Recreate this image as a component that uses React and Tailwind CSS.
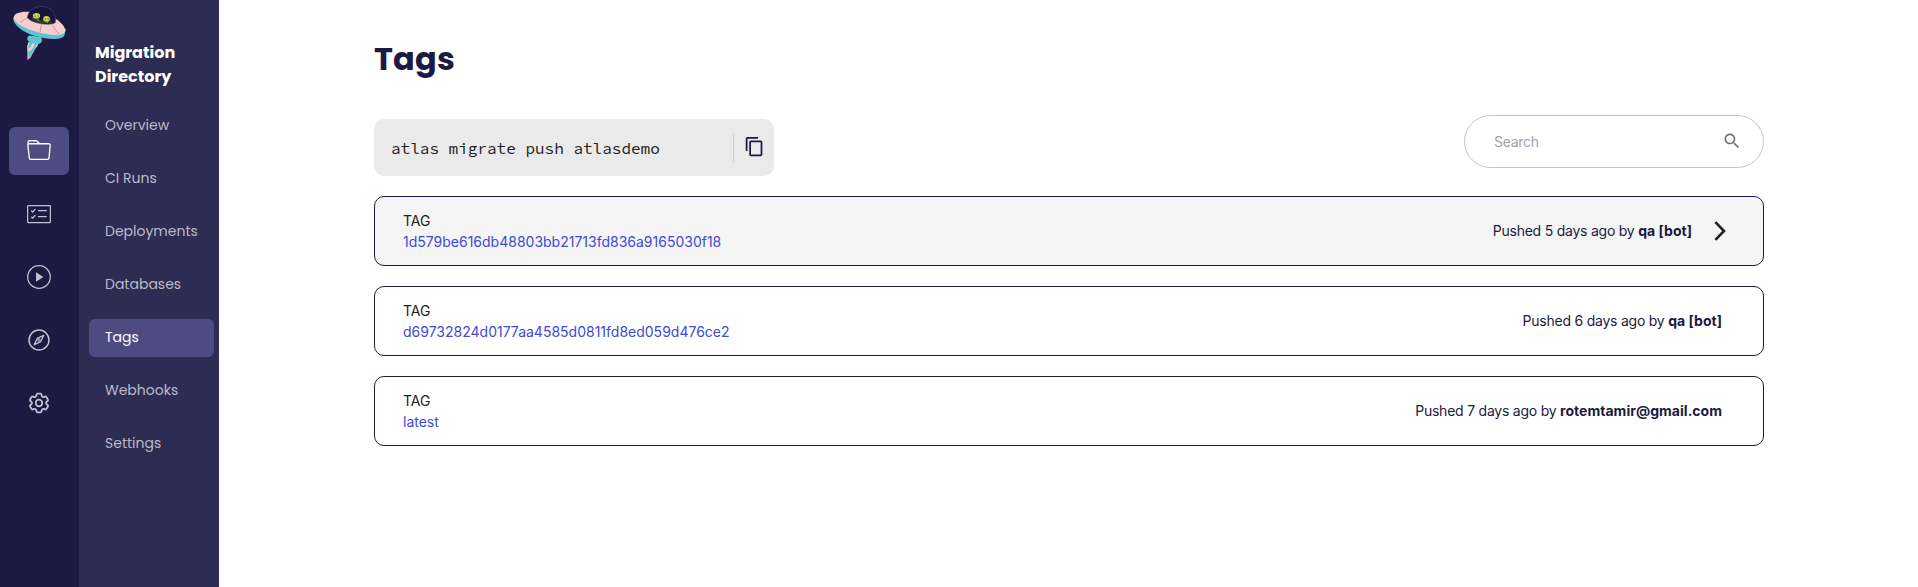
const railIcons = [
  { id: 'folder', active: true },
  { id: 'checks', active: false },
  { id: 'play', active: false },
  { id: 'compass', active: false },
  { id: 'gear', active: false },
];

const menu = ['Overview', 'CI Runs', 'Deployments', 'Databases', 'Tags', 'Webhooks', 'Settings'];

const tags = [
  { name: '1d579be616db48803bb21713fd836a9165030f18', when: '5 days ago', by: 'qa [bot]', hovered: true },
  { name: 'd69732824d0177aa4585d0811fd8ed059d476ce2', when: '6 days ago', by: 'qa [bot]' },
  { name: 'latest', when: '7 days ago', by: 'rotemtamir@gmail.com' },
];

function Logo() {
  return (
    <svg className="h-[54px] w-[54px]" viewBox="0 0 54 54" fill="none">
      <path d="M15.500 36 L14 41 L14.500 46 L14.500 54 L18 51 L19 48 L22 43 L24.500 40 L25.500 36 Z" fill="#f9cdd0" />
      <path d="M16.500 36 L14.800 43 L17.500 41 L20 36 Z M22 37 L20 42 L17.500 44.500 L15.200 46 L15.800 52 L18.500 49.500 L21 45.500 L22.500 41 L24 38 Z" fill="#5fc3d3" />
      <path d="M16.500 29.500 C13.800 30.500 13.500 34 16 35.500 C18.500 37.500 24 38.800 27 37.500 C29.500 36 29.500 33 28 31 Z" fill="#5fc3d3" />
      <path d="M0.300 11.500 C-.8 18 9 26 22 30 C36 34 50 34.300 51.500 29 L53 23 L1 12 Z" fill="#5fc3d3" />
      <path d="M17 6 C7 5.200 1.200 7.500 0.700 11.500 C0.500 16.500 12 22.700 25 26.200 C39 29.800 50.500 30 52 25.500 C53 21 47 14.500 39 11 Z" fill="#f9cdd0" />
      <path d="M7 16.500 L15.500 11 M27 26.500 L28.500 17.500 M46 28 L39 19" stroke="#8d7c96" strokeWidth=".6" />
      <path d="M14.500 11.500 C15 4.500 21.500 .4 29 .4 C37.500 .4 43.500 7 42.300 16.500 C38 20.500 17 17 14.500 11.500 Z" fill="#17163a" stroke="#454460" strokeWidth=".7" />
      <path d="M18.500 13 C19 9 24 8 26 11.500 L28 15 L29.500 13.500 C32 9 38 10 39 17 C34 18.500 24 17 18.500 13 Z" fill="#333d32" />
      <ellipse cx="23.500" cy="9.800" rx="3.600" ry="2.800" fill="#cfd64a" />
      <ellipse cx="33.500" cy="12.800" rx="3.300" ry="2.900" fill="#cfd64a" />
      <path d="M22 9.600 v1 M25 9.600 v1 M32.200 12.500 v1 M35 12.500 v1" stroke="#29331f" strokeWidth="1" />
      <path d="M24 13.500 l2 1.200 M33.500 16.200 l1.500 .3" stroke="#a4ae3d" strokeWidth=".8" />
    </svg>
  );
}

function RailIcon({ id }) {
  if (id === 'folder')
    return (
      <svg className="mb-0.5 size-6" viewBox="0 0 24 24" fill="none" stroke="currentColor" strokeWidth="1.350" strokeLinejoin="round">
        <path d="M2.300 20 L.9 7.300 C.8 6.300 1.400 5.700 2.300 5.700 H21.700 C22.700 5.700 23.300 6.300 23.200 7.300 L22 20 C21.900 20.900 21.400 21.400 20.500 21.400 H3.800 C2.900 21.400 2.400 20.900 2.300 20 Z" />
        <path d="M1.100 6.600 V4 C1.100 3.200 1.600 2.700 2.400 2.700 H8.600 C9.300 2.700 9.700 2.900 10.200 3.300 L12.700 5.700" />
      </svg>
    );
  if (id === 'checks')
    return (
      <svg className="size-6" viewBox="0 0 24 24" fill="none" stroke="currentColor" strokeWidth="1.250" strokeLinecap="round" strokeLinejoin="round">
        <rect x=".6" y="3.500" width="22.800" height="17" rx="1" />
        <path d="M4.500 9 l1.200 1 L8 7.300 M4.500 15.200 l1.200 1 L8 13.500 M11.500 8.700 h7.800 M11.500 14.700 h7.800" />
      </svg>
    );
  if (id === 'play')
    return (
      <svg className="size-6" viewBox="0 0 24 24" fill="none">
        <circle cx="12" cy="12" r="11.300" stroke="currentColor" strokeWidth="1.250" />
        <path d="M9 7.300 L16.400 12 L9 16.700 Z" fill="currentColor" />
      </svg>
    );
  if (id === 'compass')
    return (
      <svg className="size-6" viewBox="0 0 24 24" fill="none" stroke="currentColor" strokeWidth="1.500" strokeLinejoin="round">
        <circle cx="12" cy="12" r="10" />
        <path d="M16.700 7.300 L13.700 13.700 L7.300 16.700 L10.300 10.300 Z" strokeWidth="1.300" />
        <circle cx="12" cy="12" r="1.200" strokeWidth="1" />
      </svg>
    );
  return (
    <svg className="size-6" viewBox="0 0 24 24" fill="none" stroke="currentColor" strokeWidth="1.700" strokeLinecap="round" strokeLinejoin="round">
      <path
        transform="translate(-.6 -.6) scale(1.050)"
        d="M9.594 3.940c.090-.542.560-.940 1.110-.940h2.593c.550 0 1.020.398 1.110.940l.213 1.281c.063.374.313.686.645.870.074.040.147.083.220.127.325.196.720.257 1.075.124l1.217-.456a1.125 1.125 0 0 1 1.370.490l1.296 2.247a1.125 1.125 0 0 1-.260 1.431l-1.003.827c-.293.241-.438.613-.430.992a7.723 7.723 0 0 1 0 .255c-.008.378.137.750.430.991l1.004.827c.424.350.534.955.260 1.430l-1.298 2.247a1.125 1.125 0 0 1-1.369.491l-1.217-.456c-.355-.133-.750-.072-1.076.124a6.470 6.470 0 0 1-.220.128c-.331.183-.581.495-.644.869l-.213 1.281c-.090.543-.560.940-1.110.940h-2.594c-.550 0-1.019-.398-1.110-.940l-.213-1.281c-.062-.374-.312-.686-.644-.870a6.520 6.520 0 0 1-.220-.127c-.325-.196-.720-.257-1.076-.124l-1.217.456a1.125 1.125 0 0 1-1.369-.490l-1.297-2.247a1.125 1.125 0 0 1 .260-1.431l1.004-.827c.292-.240.437-.613.430-.991a6.932 6.932 0 0 1 0-.255c.007-.380-.138-.751-.430-.992l-1.004-.827a1.125 1.125 0 0 1-.260-1.430l1.297-2.247a1.125 1.125 0 0 1 1.370-.491l1.216.456c.356.133.751.072 1.076-.124.072-.044.146-.086.220-.128.332-.183.582-.495.644-.869l.214-1.280Z"
      />
      <circle cx="12" cy="12" r="3.300" />
    </svg>
  );
}

function Rail() {
  return (
    <nav className="flex w-[79px] shrink-0 flex-col bg-[#1c1a42]">
      <div className="h-[127px] pt-1.5 pl-[13px]">
        <Logo />
      </div>
      <div className="flex flex-col gap-[15px] pl-[9px]">
        {railIcons.map(({ id, active }) => (
          <a
            key={id}
            className={
              active
                ? 'flex h-12 w-[60px] items-center justify-center rounded-md bg-[#4c4b82] text-white'
                : 'flex h-12 w-[60px] items-center justify-center rounded-md text-[#c0c0d0]'
            }
          >
            <RailIcon id={id} />
          </a>
        ))}
      </div>
    </nav>
  );
}

function Sidebar() {
  return (
    <aside className="flex w-[140px] shrink-0 flex-col bg-[#2d2c52] pt-[41px] font-[Poppins,Inter,sans-serif]">
      <h2 className="pl-4 text-base leading-6 font-bold text-white">
        Migration
        <br />
        Directory
      </h2>
      <ul className="mt-[18px] flex flex-col gap-[15px] pr-[5px] pl-2.5">
        {menu.map((item) => (
          <li
            key={item}
            className={
              item === 'Tags'
                ? 'flex h-[38px] items-center rounded-md bg-[#4c4b82] pb-0.5 pl-4 text-sm text-white'
                : 'flex h-[38px] items-center rounded-md pb-0.5 pl-4 text-sm text-[#b9b9ca]'
            }
          >
            {item}
          </li>
        ))}
      </ul>
    </aside>
  );
}

function TagRow({ tag }) {
  return (
    <li
      className={
        tag.hovered
          ? 'flex h-[70px] items-center justify-between rounded-[10px] border border-[#1c1a42] bg-[#f5f5f5] pr-[37px] pl-7'
          : 'flex h-[70px] items-center justify-between rounded-[10px] border border-[#1c1a42] bg-white pr-[41px] pl-7'
      }
    >
      <div className="leading-[21px]">
        <div className="text-[#212121]">TAG</div>
        <a className="text-[#4149d8]">{tag.name}</a>
      </div>
      <div className="flex items-center text-[#1c1a42]">
        <span className="tracking-[-0.23px]">
          Pushed {tag.when} by <b className="font-bold tracking-[0.02px]">{tag.by}</b>
        </span>
        {tag.hovered && (
          <svg className="ml-[22px] h-5 w-3" viewBox="0 0 12 20" fill="none" stroke="#212121" strokeWidth="2.600">
            <path d="M1.400 1.100 L10 10 L1.400 18.900" />
          </svg>
        )}
      </div>
    </li>
  );
}

export default function App() {
  return (
    <div className="flex h-[587px] w-[1918px] overflow-hidden bg-white font-[Inter,sans-serif] text-sm">
      <Rail />
      <Sidebar />
      <main className="flex flex-1 flex-col pr-[154px] pl-[155px]">
        <h1 className="mt-[35px] font-[Poppins,Inter,sans-serif] text-[32px] leading-12 font-bold tracking-[0.2px] text-[#1c1a42]">
          Tags
        </h1>
        <div className="mt-8 flex h-[61px] items-start justify-between">
          <div className="mt-1 flex h-[57px] w-[400px] items-center rounded-[10px] bg-[#eaeaea] pl-[17px]">
            <code className="w-[342px] font-['Source_Code_Pro','Liberation_Mono',monospace] text-base text-[#212121]">
              atlas migrate push atlasdemo
            </code>
            <span className="h-7 w-px bg-[#cfcfcf]" />
            <svg className="mb-0.5 ml-2.5 size-[21px]" viewBox="0 0 24 24" fill="#1c1a42">
              <path d="M16 1H4c-1.100 0-2 .9-2 2v14h2V3h12V1zm3 4H8c-1.100 0-2 .9-2 2v14c0 1.100.9 2 2 2h11c1.100 0 2-.9 2-2V7c0-1.100-.9-2-2-2zm0 16H8V7h11v14z" />
            </svg>
          </div>
          <div className="flex h-[53px] w-[300px] items-center justify-between rounded-full border border-[#c4c4c4] pr-[21px] pl-[29px]">
            <span className="tracking-[-0.3px] text-[#a2a2a2]">Search</span>
            <svg className="mb-px size-5" viewBox="0 0 24 24" fill="#757575">
              <path d="M15.500 14h-.790l-.280-.270C15.410 12.590 16 11.110 16 9.500 16 5.910 13.090 3 9.500 3S3 5.910 3 9.500 5.910 16 9.500 16c1.610 0 3.090-.590 4.230-1.570l.270.280v.790l5 4.990L20.490 19l-4.990-5zm-6 0C7.010 14 5 11.990 5 9.500S7.010 5 9.500 5 14 7.010 14 9.500 11.990 14 9.500 14z" />
            </svg>
          </div>
        </div>
        <ul className="mt-5 flex flex-col gap-5">
          {tags.map((tag) => (
            <TagRow key={tag.name} tag={tag} />
          ))}
        </ul>
      </main>
    </div>
  );
}
